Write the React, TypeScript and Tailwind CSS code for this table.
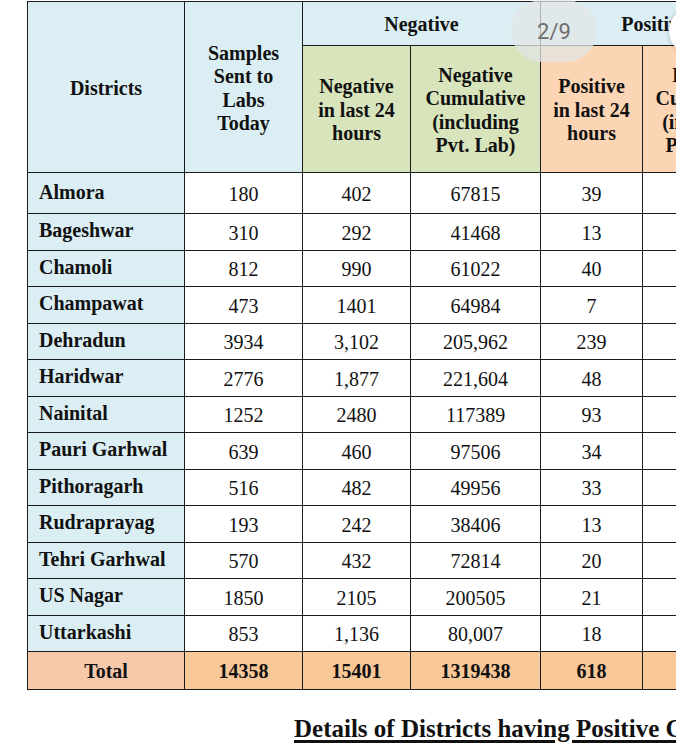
import React from "react";

interface Row {
  name: string;
  samples: string;
  neg24: string;
  negCum: string;
  pos24: string;
}

const rows: Row[] = [
  { name: "Almora", samples: "180", neg24: "402", negCum: "67815", pos24: "39" },
  { name: "Bageshwar", samples: "310", neg24: "292", negCum: "41468", pos24: "13" },
  { name: "Chamoli", samples: "812", neg24: "990", negCum: "61022", pos24: "40" },
  { name: "Champawat", samples: "473", neg24: "1401", negCum: "64984", pos24: "7" },
  { name: "Dehradun", samples: "3934", neg24: "3,102", negCum: "205,962", pos24: "239" },
  { name: "Haridwar", samples: "2776", neg24: "1,877", negCum: "221,604", pos24: "48" },
  { name: "Nainital", samples: "1252", neg24: "2480", negCum: "117389", pos24: "93" },
  { name: "Pauri Garhwal", samples: "639", neg24: "460", negCum: "97506", pos24: "34" },
  { name: "Pithoragarh", samples: "516", neg24: "482", negCum: "49956", pos24: "33" },
  { name: "Rudraprayag", samples: "193", neg24: "242", negCum: "38406", pos24: "13" },
  { name: "Tehri Garhwal", samples: "570", neg24: "432", negCum: "72814", pos24: "20" },
  { name: "US Nagar", samples: "1850", neg24: "2105", negCum: "200505", pos24: "21" },
  { name: "Uttarkashi", samples: "853", neg24: "1,136", negCum: "80,007", pos24: "18" },
];

const cell = "border border-[#1a1a1a] text-center align-middle";
const head = "border border-[#1a1a1a] text-center align-middle pt-[3px]";

const App: React.FC = () => {
  return (
    <div className="relative w-[676px] h-[750px] overflow-hidden bg-white text-[#111] font-['Liberation_Serif',serif]">
      <div className="pl-[27px] pt-px">
        <table className="table-fixed border-collapse w-[741px] text-[20px]">
          <colgroup>
            <col className="w-[157px]" />
            <col className="w-[118px]" />
            <col className="w-[108px]" />
            <col className="w-[130px]" />
            <col className="w-[102px]" />
            <col className="w-[126px]" />
          </colgroup>
          <thead className="font-bold leading-[23.5px]">
            <tr className="h-[44px] bg-[#daeef3]">
              <th rowSpan={2} className={head}>Districts</th>
              <th rowSpan={2} className={head}>
                Samples
                <br />
                Sent to
                <br />
                Labs
                <br />
                Today
              </th>
              <th colSpan={2} className={head}>Negative</th>
              <th colSpan={2} className={head}>Positive</th>
            </tr>
            <tr className="h-[127px]">
              <th className={`${head} bg-[#d8e4bc]`}>
                Negative
                <br />
                in last 24
                <br />
                hours
              </th>
              <th className={`${head} bg-[#d8e4bc]`}>
                Negative
                <br />
                Cumulative
                <br />
                (including
                <br />
                Pvt. Lab)
              </th>
              <th className={`${head} bg-[#fcd5b4]`}>
                Positive
                <br />
                in last 24
                <br />
                hours
              </th>
              <th className={`${head} bg-[#fcd5b4]`}>
                Positive
                <br />
                Cumulative
                <br />
                (including
                <br />
                Pvt. Lab)
              </th>
            </tr>
          </thead>
          <tbody>
            {rows.map((r, i) => (
              <tr key={r.name} className={i === 0 ? "h-[41px]" : "h-[36.5px]"}>
                <td className="border border-[#1a1a1a] bg-[#daeef3] pl-[11px] pb-[3px] font-bold text-left align-middle">
                  {r.name}
                </td>
                <td className={`${cell} pt-[2px]`}>{r.samples}</td>
                <td className={`${cell} pt-[2px]`}>{r.neg24}</td>
                <td className={`${cell} pt-[2px]`}>{r.negCum}</td>
                <td className={`${cell} pt-[2px]`}>{r.pos24}</td>
                <td className={cell}></td>
              </tr>
            ))}
            <tr className="h-[38px] font-bold">
              <td className={`${cell} bg-[#f6c9ab]`}>Total</td>
              <td className={`${cell} bg-[#f9c899]`}>14358</td>
              <td className={`${cell} bg-[#f9c899]`}>15401</td>
              <td className={`${cell} bg-[#f9c899]`}>1319438</td>
              <td className={`${cell} bg-[#f9c899]`}>618</td>
              <td className={`${cell} bg-[#f9c899]`}></td>
            </tr>
          </tbody>
        </table>
      </div>

      <div className="mt-[26px] pl-[294px] whitespace-nowrap">
        <span className="text-[25px] leading-[25px] font-bold underline decoration-[3px] underline-offset-[3px]">
          Details of Districts having Positive Cases
        </span>
      </div>

      {/* page indicator overlay */}
      <div className="absolute left-[511px] top-0 w-[86px] h-[62px] rounded-full bg-[#e3e5e5]/75 flex items-center justify-center">
        <span className="font-['Roboto',sans-serif] text-[22px] text-[#6e6e6e]">2/9</span>
      </div>
      <div className="absolute left-[669px] top-[7px] w-[48px] h-[48px] rounded-full bg-white shadow-[0_0_4px_rgba(0,0,0,0.25)]" />
    </div>
  );
};

export default App;
